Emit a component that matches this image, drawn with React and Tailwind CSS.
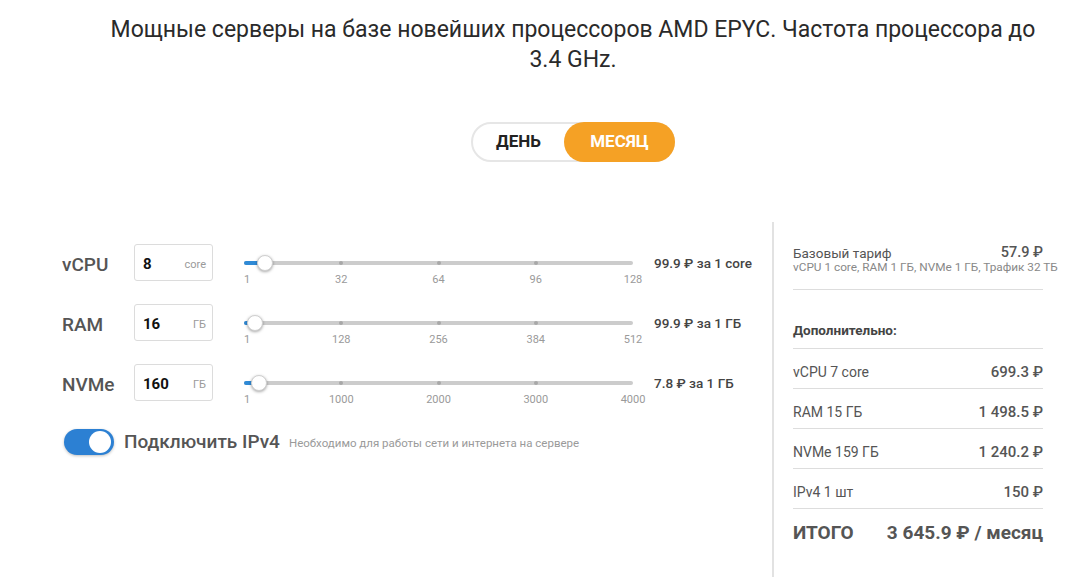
import React from "react";

const font = { fontFamily: "Roboto, 'Noto Sans', sans-serif" };

function Slider({ value, min, max, ticks }) {
  const pct = ((value - min) / (max - min)) * 100;
  return (
    <div className="relative w-[389px] h-[37px] shrink-0">
      <div className="absolute left-0 right-0 top-[17px] h-[4px] rounded-full bg-[#cccccc]" />
      {ticks.slice(1, -1).map((t, i) => (
        <div
          key={t}
          className="absolute top-[17px] h-[4px] w-[4px] -ml-[2px] rounded-full bg-[#a8a8a8]"
          style={{ left: `${((i + 1) / (ticks.length - 1)) * 100}%` }}
        />
      ))}
      <div className="absolute left-0 top-[17px] h-[4px] rounded-l-full bg-[#2f8ad6]" style={{ width: `${pct}%` }} />
      <div
        className="absolute top-[11px] h-[16px] w-[16px] -ml-[8px] rounded-full bg-white border border-[#d0d0d0] shadow-[0_1px_3px_rgba(0,0,0,0.35)]"
        style={{ left: `${pct}%` }}
      />
      {ticks.map((t, i) => (
        <div
          key={"l" + t}
          className={`absolute top-[29px] text-[11px] leading-[14px] text-[#9a9a9a] ${i === 0 ? "" : "-translate-x-1/2"}`}
          style={{ left: `${(i / (ticks.length - 1)) * 100}%` }}
        >
          {t}
        </div>
      ))}
    </div>
  );
}

function Row({ label, value, unit, slider, price }) {
  return (
    <div className="flex items-center h-[37px]">
      <div className="w-[72px] shrink-0 pt-[5px] text-[19px] font-medium text-[#555]">{label}</div>
      <div className="w-[79px] shrink-0 h-[37px] rounded-[3px] border border-[#dcdcdc] flex items-center justify-between pl-[8px] pr-[6px] pt-[3px]">
        <span className="text-[15px] font-bold text-[#111]">{value}</span>
        <span className="text-[11px] text-[#9a9a9a] pt-[2px]">{unit}</span>
      </div>
      <div className="ml-[31px] shrink-0">{slider}</div>
      <div className="ml-[21px] whitespace-nowrap text-[13.5px] font-medium text-[#444] pt-[2px]">{price}</div>
    </div>
  );
}

export default function App() {
  return (
    <div className="w-[1068px] h-[582px] bg-white overflow-hidden" style={font}>
      <div className="ml-[106px] w-[934px] pt-[15px] text-center text-[23px] leading-[30px] text-[#2a2a2a] whitespace-nowrap">
        Мощные серверы на базе новейших процессоров AMD EPYC. Частота процессора до
        <br />
        3.4 GHz.
      </div>

      <div className="ml-[106px] w-[934px] mt-[47px] flex justify-center">
        <div className="flex h-[40px] w-[204px] rounded-full border-2 border-[#e6e6e6]">
          <div className="w-[91px] flex items-center justify-center text-[17px] font-bold text-[#222]">ДЕНЬ</div>
          <div className="-my-[2px] -mr-[2px] h-[40px] flex-1 rounded-full bg-[#f5a125] flex items-center justify-center text-[17px] font-bold text-white">
            МЕСЯЦ
          </div>
        </div>
      </div>

      <div className="mt-[60px] flex">
        <div className="w-[772px] shrink-0 pl-[62px] pt-[22px]">
          <div className="flex flex-col gap-[23px]">
            <Row
              label="vCPU"
              value="8"
              unit="core"
              slider={<Slider value={8} min={1} max={128} ticks={[1, 32, 64, 96, 128]} />}
              price="99.9 ₽ за 1 core"
            />
            <Row
              label="RAM"
              value="16"
              unit="ГБ"
              slider={<Slider value={16} min={1} max={512} ticks={[1, 128, 256, 384, 512]} />}
              price="99.9 ₽ за 1 ГБ"
            />
            <Row
              label="NVMe"
              value="160"
              unit="ГБ"
              slider={<Slider value={160} min={1} max={4000} ticks={[1, 1000, 2000, 3000, 4000]} />}
              price="7.8 ₽ за 1 ГБ"
            />
          </div>
          <div className="mt-[27px] flex items-center">
            <div className="ml-[2px] shrink-0 relative w-[50px] h-[26px] rounded-full bg-[#2c80d3] shadow-[0_1px_3px_rgba(0,0,0,0.25)]">
              <div className="absolute right-[3px] top-[2px] w-[22px] h-[22px] rounded-full bg-white" />
            </div>
            <span className="ml-[10px] text-[19px] font-medium text-[#555]">Подключить IPv4</span>
            <span className="ml-[9px] text-[11.5px] text-[#9a9a9a] pt-[2px]">Необходимо для работы сети и интернета на сервере</span>
          </div>
        </div>

        <div className="w-[2px] shrink-0 h-[355px] bg-[#e2e2e2]" />

        <div className="ml-[19px] w-[250px] shrink-0">
          <div className="pt-[23px] pb-[16px] border-b border-[#dddddd]">
            <div className="flex justify-between h-[16px] items-center">
              <span className="text-[13.5px] text-[#555]">Базовый тариф</span>
              <span className="text-[14.5px] font-medium text-[#555]">57.9 ₽</span>
            </div>
            <div className="text-[11.8px] leading-[12px] text-[#888] whitespace-nowrap">
              vCPU 1 core, RAM 1 ГБ, NVMe 1 ГБ, Трафик 32 ТБ
            </div>
          </div>
          <div className="pt-[32px] pb-[10px] border-b border-[#dddddd] text-[13.5px] leading-[16px] font-bold text-[#444]">
            Дополнительно:
          </div>
          {[
            ["vCPU 7 core", "699.3 ₽"],
            ["RAM 15 ГБ", "1 498.5 ₽"],
            ["NVMe 159 ГБ", "1 240.2 ₽"],
            ["IPv4 1 шт", "150 ₽"],
          ].map(([a, b]) => (
            <div key={a} className="pt-[15px] pb-[8px] border-b border-[#dddddd] flex justify-between leading-[16px]">
              <span className="text-[14px] text-[#555]">{a}</span>
              <span className="text-[15px] font-medium text-[#555]">{b}</span>
            </div>
          ))}
          <div className="pt-[12px] flex justify-between items-center leading-[24px]">
            <span className="text-[19px] font-bold text-[#555]">ИТОГО</span>
            <span className="text-[19px] font-bold text-[#555]">3 645.9 ₽ / месяц</span>
          </div>
        </div>
      </div>
    </div>
  );
}
